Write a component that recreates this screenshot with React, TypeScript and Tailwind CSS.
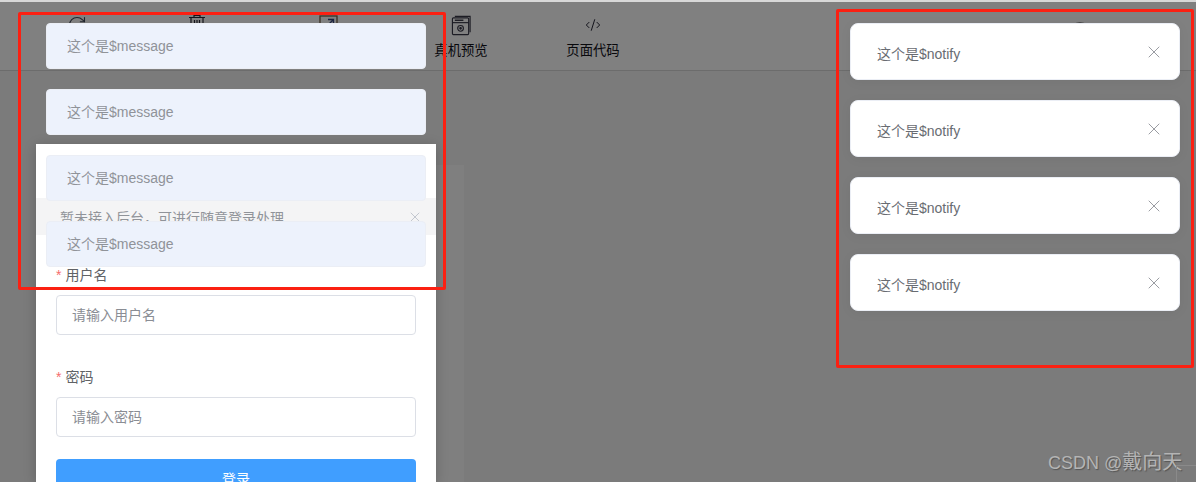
import { CodeXml, RotateCw, X } from "lucide-react";

const font = "font-['Liberation_Sans','Noto_Sans_CJK_SC',sans-serif]";

const messageTops = ["top-[23px]", "top-[89px]", "top-[155px]", "top-[221px]"];
const notifyTops = ["top-[23px]", "top-[100px]", "top-[177px]", "top-[254px]"];

function TrashIcon() {
  return (
    <svg width="18" height="20" viewBox="0 0 18 20" fill="none" stroke="#14141c" strokeWidth="1.2">
      <path d="M1 2.5 H17 M6 2.5 V0.5 H12 V2.5" />
      <path d="M3 2.5 V17 H15 V2.5" />
      <path d="M6.5 5 V15 M9 5 V15 M11.5 5 V15" />
    </svg>
  );
}

function ExportIcon() {
  return (
    <svg width="20" height="20" viewBox="0 0 20 20" fill="none" stroke="#1c1c24" strokeWidth="1.3">
      <rect x="1" y="1" width="17" height="17" stroke="#3a3024" />
      <path d="M5 14 L14 5 M9 4.5 H14.5 V10" stroke="#1c2440" />
    </svg>
  );
}

function DeviceIcon() {
  return (
    <svg width="21" height="21" viewBox="0 0 22 22" fill="none" stroke="#1c1c24" strokeWidth="1.2">
      <path d="M4 1.5 H20 V18" />
      <rect x="1.5" y="3" width="17" height="17.5" rx="1" />
      <path d="M1.5 8 H18.5" />
      <path d="M4 5.5 H13" strokeWidth="1.5" />
      <circle cx="10" cy="14" r="3" />
      <circle cx="10" cy="14" r="0.8" fill="#1c1c24" />
    </svg>
  );
}

function ToolItem({ icon, label, className }: { icon: React.ReactNode; label?: string; className: string }) {
  return (
    <div className={`flex flex-col items-center ${className}`}>
      <div className="flex h-[24px] items-center justify-center">{icon}</div>
      {label && <span className="mt-[4px] text-[13.33px] leading-[20px] text-[#08080c]">{label}</span>}
    </div>
  );
}

function Toolbar() {
  return (
    <div className="flex h-[69px] items-start border-b border-[#6c6c6c] bg-[#808080] pt-[11px]">
      <ToolItem className="ml-[17px] w-[120px]" icon={<RotateCw size={20} strokeWidth={1.3} color="#20242c" />} />
      <ToolItem className="w-[120px]" icon={<TrashIcon />} />
      <ToolItem className="ml-[6px] w-[132px]" icon={<ExportIcon />} />
      <ToolItem className="w-[132px]" icon={<DeviceIcon />} label="真机预览" />
      <ToolItem className="w-[132px]" icon={<CodeXml size={16} strokeWidth={1.5} color="#14141c" />} label="页面代码" />
      <div className="ml-[411px] mt-[9px] h-[20px] w-[20px] rounded-full bg-[#484848]" />
    </div>
  );
}

function LoginCard() {
  return (
    <div className="absolute left-[36px] top-[144px] h-[338px] w-[400px] overflow-hidden bg-white pt-[54px] shadow-[0_2px_12px_rgba(0,0,0,0.2)]">
      <div className="flex h-[37px] items-center justify-between bg-[#f4f4f5] pl-[24px] pr-[13px] text-[14px] text-[#909399]">
        <span className="mt-[4px]">暂未接入后台，可进行随意登录处理</span>
        <X size={16} strokeWidth={1.4} color="#c0c4cc" />
      </div>
      <div className="flex flex-col px-[20px] pt-[29px] text-[14px]">
        <label className="h-[22px] leading-[22px] text-[#606266]">
          <span className="mr-[4px] text-[#f56c6c]">*</span>用户名
        </label>
        <div className="mt-[9px] flex h-[40px] items-center rounded-[4px] border border-[#dcdfe6] px-[15px] text-[#8a8d94]">
          请输入用户名
        </div>
        <label className="mt-[31px] h-[22px] leading-[22px] text-[#606266]">
          <span className="mr-[4px] text-[#f56c6c]">*</span>密码
        </label>
        <div className="mt-[9px] flex h-[40px] items-center rounded-[4px] border border-[#dcdfe6] px-[15px] text-[#8a8d94]">
          请输入密码
        </div>
        <div className="mt-[22px] flex h-[40px] items-center justify-center rounded-[4px] bg-[#409eff] text-white">
          登录
        </div>
      </div>
    </div>
  );
}

export default function App() {
  return (
    <div className={`relative h-[482px] w-[1196px] overflow-hidden bg-[#7b7b7b] ${font}`}>
      <div className="h-[2px] bg-[#d8d8d8]" />
      <Toolbar />
      <div className="ml-[36px] mt-[94px] h-[317px] w-[428px] bg-[#7f7f7f]" />

      <LoginCard />

      {messageTops.map((top) => (
        <div
          key={top}
          className={`absolute left-[46px] flex h-[46px] w-[380px] items-center rounded-[4px] border border-[#ebeef5] bg-[#edf2fc] pl-[20px] text-[14px] text-[#909399] ${top}`}
        >
          这个是$message
        </div>
      ))}

      {notifyTops.map((top) => (
        <div
          key={top}
          className={`absolute left-[850px] flex h-[57px] w-[330px] items-center justify-between rounded-[8px] border border-[#ebeef5] bg-white pl-[26px] pr-[15px] text-[14px] text-[#696c72] shadow-[0_2px_12px_rgba(0,0,0,0.05)] ${top}`}
        >
          <span className="mt-[6px]">这个是$notify</span>
          <X size={20} strokeWidth={1.1} color="#909399" className="mt-[1px]" />
        </div>
      ))}

      {/* red annotation boxes */}
      <div className="absolute left-[18px] top-[12px] h-[278px] w-[428px] rounded-[2px] border-[3px] border-[#fb2012]" />
      <div className="absolute left-[836px] top-[9px] h-[359px] w-[358px] rounded-[2px] border-[3px] border-[#fb2012]" />

      {/* watermark */}
      <div className="absolute left-[1048px] top-[450px] text-[18px] leading-[24px] text-[#b4b4b4] [text-shadow:1px_1px_1px_#555]">
        CSDN @<span className="text-[20px]">戴向天</span>
      </div>
      <div className="absolute left-[1176px] top-[465px] h-[17px] w-[20px] border-l border-t border-[#8a8a8a]" />
    </div>
  );
}
